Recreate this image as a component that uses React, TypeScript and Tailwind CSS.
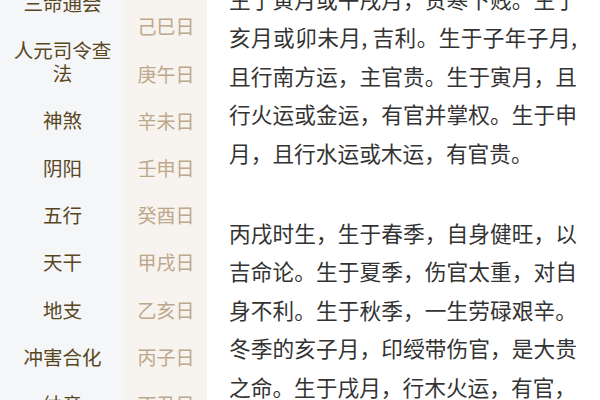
const topics = ["三命通会", "人元司令查法", "神煞", "阴阳", "五行", "天干", "地支", "冲害合化", "纳音"];

const days = ["戊辰日", "己巳日", "庚午日", "辛未日", "壬申日", "癸酉日", "甲戌日", "乙亥日", "丙子日", "丁丑日"];

const paragraphs = [
  "生于寅月或午戌月，贵寒下贱。生于亥月或卯未月, 吉利。生于子年子月,且行南方运，主官贵。生于寅月，且行火运或金运，有官并掌权。生于申月，且行水运或木运，有官贵。",
  "丙戌时生，生于春季，自身健旺，以吉命论。生于夏季，伤官太重，对自身不利。生于秋季，一生劳碌艰辛。冬季的亥子月，印绶带伤官，是大贵之命。生于戌月，行木火运，有官，",
];

export default function App() {
  return (
    <div
      className="flex w-[600px] h-[400px] overflow-hidden bg-white"
      style={{ fontFamily: '"Noto Sans CJK SC", "Noto Sans", sans-serif' }}
    >
      {/* topic list */}
      <div className="w-[125px] shrink-0 bg-[#f5f6f7]">
        <div className="-mt-[21.5px]">
          {topics.map((t) => (
            <div
              key={t}
              className="px-[9px] py-3 text-center text-[19.5px] leading-[23.3px] text-[#58461f]"
            >
              {t}
            </div>
          ))}
        </div>
      </div>

      {/* day list */}
      <div className="w-[82px] shrink-0 bg-[#f7f3ee]">
        <div className="-mt-[44.8px]">
          {days.map((d) => (
            <div
              key={d}
              className="py-3 text-center text-[19px] leading-[23.2px] text-[#bda88b]"
            >
              {d}
            </div>
          ))}
        </div>
      </div>

      {/* article */}
      <div className="flex-1 pl-[22px]">
        <div className="-mt-[20.25px] w-[348px]">
          {paragraphs.map((p, i) => (
            <p
              key={i}
              className="mb-[41.5px] text-justify text-[21.7px] leading-[38.5px] text-[#333333]"
            >
              {p}
            </p>
          ))}
        </div>
      </div>
    </div>
  );
}
